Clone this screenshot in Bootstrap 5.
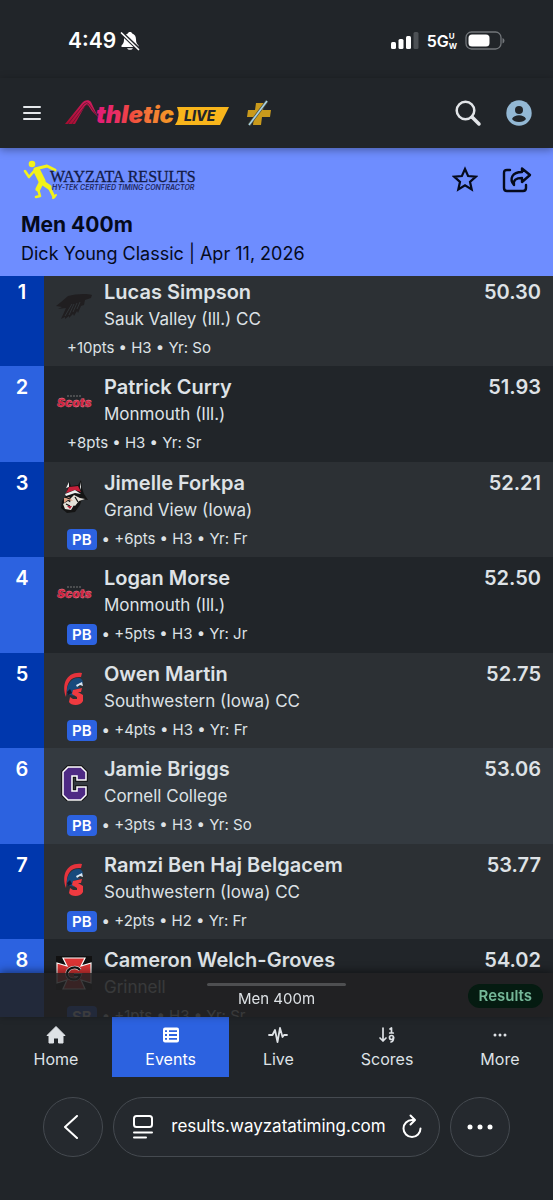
<!DOCTYPE html>
<html lang="en" data-bs-theme="dark">
<head>
<meta charset="utf-8">
<meta name="viewport" content="width=device-width, initial-scale=1">
<title>Men 400m - Wayzata Results</title>
<link href="https://cdn.jsdelivr.net/npm/bootstrap@5.3.0/dist/css/bootstrap.min.css" rel="stylesheet">
<style>
body{font-family:Inter,"Liberation Sans",sans-serif;background:#212529;color:#dee2e6}
svg{display:block;flex:none}
button{color:inherit}
.status{height:78px;padding:4px 48px 0 68px;color:#fff}
.clock{font-size:21px;font-weight:600;line-height:28px}
.carrier{font-size:16px;font-weight:600;line-height:20px}
.carrier-tag{font-size:8px;font-weight:700;line-height:10px}
.appbar{height:70px;padding:0 21px;position:relative;z-index:2;box-shadow:0 2px 8px rgba(0,0,0,.35)}
.event-head{background:#6e8dff;color:#050a1c;padding:10px 21px 8px}
.event-head h1{font-size:21px;font-weight:700;line-height:30px;color:#050a1c}
.event-head p{font-size:18px;line-height:28px}
.stage{flex:1 1 0;min-height:0}
.scroller{overflow-y:auto;scrollbar-width:none}
.scroller::-webkit-scrollbar{display:none}
.results{margin-top:-5px}
.results td{padding:8px 0 6px;vertical-align:top}
.results tr{background:#2c3034}
.results tr:nth-child(even){background:#212529}
.results tr:nth-child(even) td{padding-bottom:7px}
.results tr.picked:nth-child(even){background:#343a40}
.results .rank{width:44px;background:#0037ad;color:#fff;text-align:center;font-size:20px;font-weight:600;line-height:27px}
.results tr:nth-child(even) .rank{background:#2c62e0}
.team-logo{width:60px;padding:9px 0 0 12px}
.athlete,.mark-time{font-size:20px;font-weight:600;line-height:27px}
.results .mark-time{padding-right:12px;text-align:right}
.school{font-size:17px;line-height:27px}
.facts{font-size:15px;line-height:24px;margin:3px 0 0 23px}
.best{background:#2c62e0;color:#fff;font-weight:600;border-radius:4px;line-height:21px;padding:0 5px;margin-right:5px}
.sheet{height:44px;background:rgba(33,33,34,.88);box-shadow:0 -2px 8px rgba(0,0,0,.45)}
.grip{width:25%;height:3px;background:#4e4f51;margin-top:10px}
.sheet-title{font-size:15px;line-height:26px}
.state{right:10px;top:11px;background:#051b11;color:#75b798;font-size:15px;font-weight:600;line-height:24px;padding:0 11px}
.tabs a{color:#dee2e6;font-size:16px;line-height:28px;height:60px;padding-top:8px;text-decoration:none}
.tabs a.active{background:#2c62e0;color:#fff}
.browser{padding:20px 43px 43px;gap:10px;color:#fff}
.glass{background:#25292e;border:1px solid #454a50;height:60px}
.disc{width:60px;flex:none}
.address{font-size:17px;min-width:0}
</style>
</head>
<body>
<svg width="0" height="0" class="position-absolute" aria-hidden="true">
  <symbol id="spartan" viewBox="0 0 36 36"><path d="M10 27C5 14 11 1 26 3l-1 4C15 6 12 12 11 18z" fill="#e5333c"/><path d="M11 24c-1-9 4-16 11-16 3 0 5 2 5 5l-7 3 5 2-5 1-3 1 1 6z" fill="#174a7c"/><path d="m20 15 6-3 1 4-3-1-3 2z" fill="#d7e7f5"/><path d="m17 20 9-2-1 4h-3l5 3v6c-2 5-12 5-14 1l1-5 3 2h4v-2l-5-3z" fill="#ef3a40"/><path d="m11 22 3-3 2 4-4 2z" fill="#111c30"/></symbol>
</svg>
<div class="vh-100 d-flex flex-column overflow-hidden">
  <div class="status flex-shrink-0 d-flex align-items-center justify-content-between">
    <div class="d-flex align-items-center gap-1">
      <span class="clock">4:49</span>
      <svg width="20" height="20" viewBox="0 0 20 20" fill="#fff"><path d="M10 1c-1.300 0-2 .7-2.200 1.500C5 3.400 4 5.500 4 8.500c0 3-.8 4.500-2.500 6V16h17v-1.500C16.800 13 16 11.500 16 8.500c0-3-1-5.100-3.800-6C12 1.700 11.300 1 10 1zM7 17.200a3.200 2.500 0 0 0 6 0z"/><path d="M1 1.500 19 18.500" stroke="#212529" stroke-width="4"/><path d="M1.500 2 18.500 18.500" stroke="#fff" stroke-width="1.700" stroke-linecap="round"/></svg>
    </div>
    <div class="d-flex align-items-center">
      <svg width="28" height="18" viewBox="0 0 28 18" fill="#fff"><rect y="10" width="5" height="7" rx="1.500"/><rect x="7.500" y="7" width="5" height="10" rx="1.500"/><rect x="15" y="4" width="5" height="13" rx="1.500"/><rect x="22.500" width="5" height="17" rx="1.500" fill="#4d5155"/></svg>
      <span class="carrier ms-2">5G</span><span class="carrier-tag d-flex flex-column"><span>U</span><span>W</span></span>
      <svg class="ms-2" width="40" height="20" viewBox="0 0 40 20"><rect x="1" y="1" width="35" height="17" rx="5.500" fill="none" stroke="#72767a" stroke-width="1.300"/><rect x="3.500" y="3.500" width="21" height="12" rx="3.500" fill="#fff"/><path d="M37.500 7q2 .5 2 2.700t-2 2.700z" fill="#72767a"/></svg>
    </div>
  </div>

  <header class="appbar flex-shrink-0 d-flex align-items-center">
    <button class="btn p-0 border-0" aria-label="Menu"><svg width="20" height="18" viewBox="0 0 20 18"><path d="M3 3h16M3 9h16M3 15h16" stroke="#e5e8eb" stroke-width="2" stroke-linecap="round"/></svg></button>
    <a href="#" class="ms-4" aria-label="AthleticLIVE">
      <svg width="164" height="30" viewBox="0 0 164 30">
        <defs><linearGradient id="heat" gradientUnits="userSpaceOnUse" x1="34" y1="0" x2="114" y2="0"><stop offset="0" stop-color="#e21c77"/><stop offset=".2" stop-color="#e82c66"/><stop offset=".4" stop-color="#f0493f"/><stop offset=".65" stop-color="#f47b36"/><stop offset="1" stop-color="#f3a21e"/></linearGradient><linearGradient id="wing" x1="0" y1="1" x2="1" y2="0"><stop offset="0" stop-color="#a60d2f"/><stop offset="1" stop-color="#d41e62"/></linearGradient></defs>
        <path d="M0 26 17 5c2-3 7-4 9-1l7 15-6-6-4-6c-1-1-2 0-3 1L10 26z" fill="url(#wing)"/><path d="M3 26 19 6q3-3 5 0l8 12M7 26 20 8q2-2 3 0" fill="none" stroke="#5e1430" stroke-width=".8"/>
        <path d="M112 9h52l-9 18h-45q6-9 2-18z" fill="#f8b51b"/>
        <text x="31" y="25" font-family="Inter" font-size="24" font-weight="900" font-style="italic" fill="url(#heat)">thletic</text>
        <text x="119" y="23" font-family="Inter" font-size="14" font-weight="800" font-style="italic" fill="#23262a">LIVE</text>
      </svg></a>
    <svg class="ms-3" width="28" height="28" viewBox="0 0 28 28"><path d="M11 4h8l-1 7h8l-1 7h-8l-1 8H8l1-8H2l1-7h7z" fill="#c99a1c"/><path d="M22 2 4 26" stroke="#4d513f" stroke-width="3"/><path d="M22 2 4 26" stroke="#a9d3e6" stroke-width="1.600"/></svg>
    <button class="btn p-0 border-0 ms-auto" aria-label="Search"><svg width="28" height="28" viewBox="0 0 28 28" fill="none" stroke="#e2e5e8"><circle cx="11.500" cy="11.500" r="8.800" stroke-width="2.500"/><path d="m18 18 7 7" stroke-width="3.500" stroke-linecap="round"/></svg></button>
    <button class="btn p-0 border-0 ms-4" aria-label="Account"><svg width="26" height="26" viewBox="0 0 26 26"><circle cx="13" cy="13" r="12.700" fill="#93b8d4"/><circle cx="13" cy="10" r="4" fill="#212529"/><path d="M6 19c2-5 12-5 14 0q-2 3-7 3t-7-3z" fill="#212529"/></svg></button>
  </header>

  <section class="event-head">
    <div class="d-flex justify-content-between align-items-center mb-2">
      <svg width="178" height="44" viewBox="0 0 178 44" role="img" aria-label="Wayzata Results">
        <g fill="none" stroke="#f2f21a" stroke-linecap="round" stroke-linejoin="round"><path d="m14 11 12-3 8 4" stroke-width="3"/><path d="m14 12-6 7-4-6" stroke-width="2.600"/><path d="m16 13 5 10" stroke-width="7"/><path d="m22 25 6 4" stroke-width="5"/><path d="m28 29 4 8 1 2" stroke-width="3"/><path d="m20 25-3 6" stroke-width="5"/><path d="m17 31 2 7-4 1" stroke-width="2.600"/><path d="m32 40 3-3" stroke-width="2"/></g><circle cx="11" cy="6" r="3.300" fill="#f2f21a"/>
        <text x="29" y="24" font-family="Liberation Serif" font-size="16" fill="#121a45" stroke="#121a45" stroke-width=".3">WAYZATA RESULTS</text>
        <text x="31" y="32" font-family="Inter" font-size="7" font-weight="600" font-style="italic" fill="#1c2660">HY-TEK CERTIFIED TIMING CONTRACTOR</text>
      </svg>
      <div class="d-flex gap-4">
        <button class="btn p-0 border-0" aria-label="Favourite"><svg width="26" height="28" viewBox="0 0 26 28"><path d="m13 3 3.100 7 7.700.7-5.800 5.100 1.700 7.600L13 19.400l-6.700 4 1.700-7.600-5.800-5.100 7.700-.7z" fill="none" stroke="#050a1c" stroke-width="2.200"/></svg></button>
        <button class="btn p-0 border-0" aria-label="Share"><svg width="30" height="28" viewBox="0 0 30 28" fill="none" stroke="#050a1c" stroke-width="2.400" stroke-linejoin="round" stroke-linecap="round"><path d="M8 4H5q-3 0-3 3v15q0 3 3 3h16q3 0 3-3v-3"/><path d="M20 2.500 28 9l-8 7v-4c-6 0-9 2-8 7-5-6-2-13 8-13z"/></svg></button>
      </div>
    </div>
    <h1 class="mb-0">Men 400m</h1>
    <p class="mb-0">Dick Young Classic | Apr 11, 2026</p>
  </section>

  <main class="stage position-relative">
    <div class="scroller h-100">
      <table class="results w-100">
        <tbody>
        <tr><td class="rank">1</td><td><div class="d-flex"><div class="team-logo"><svg width="36" height="36" viewBox="0 0 36 36"><path d="M36 7c-6-2-17-1-24 1L5 14l-5 4 6 1-4 2 8-1-5 11 4-2v2l4-3v2l4-4 1 2 3-5 1 2 3-7 3-1 1-5 6-2z" fill="#201e20"/><path d="M16 16 9 28m9-12-5 11m8-12-4 9m7-10-3 7" stroke="#34383c" stroke-width=".8"/></svg></div><div><div class="athlete">Lucas Simpson</div><div class="school">Sauk Valley (Ill.) CC</div></div></div><div class="facts">+10pts • H3 • Yr: So</div></td><td class="mark-time">50.30</td></tr>
        <tr><td class="rank">2</td><td><div class="d-flex"><div class="team-logo"><svg width="36" height="36" viewBox="0 0 36 36"><text x="1" y="24" font-family="Inter" font-size="12" font-weight="900" font-style="italic" fill="#d3203f" stroke="#e8909f" stroke-width=".3">Scots</text><path d="M11 13h14" stroke="#777" stroke-dasharray="2 1"/></svg></div><div><div class="athlete">Patrick Curry</div><div class="school">Monmouth (Ill.)</div></div></div><div class="facts">+8pts • H3 • Yr: Sr</div></td><td class="mark-time">51.93</td></tr>
        <tr><td class="rank">3</td><td><div class="d-flex"><div class="team-logo"><svg width="36" height="36" viewBox="0 0 36 36"><path d="m12 8 1-6 2 5 7-1 3-5 1 8 2 6 4 6-6-1-2 6-5 7-8 1-6-5 1-7 4-5z" fill="#141414"/><path d="m10 14 3-6 9-1 3 6-6-2z" fill="#c5203a"/><path d="m24 8 1-5v8zM10 9l3-6v5zM9 15l10-4 6 4-6-1-9 3z" fill="#eee"/><path d="m18 16 6 3 5 1-6 2-4 5-5-3 1-5zM7 25l5-3 6 4-3 5-6-1z" fill="#e5e1d8"/><path d="m8 19 5-1 4 4-5-1-4 3z" fill="#dba186"/><path d="M9 18l5 2M19 18l3 5M10 25l4 2" stroke="#141414" stroke-width="1.300"/><path d="m11 27 5 0-2 3z" fill="#b32238"/></svg></div><div><div class="athlete">Jimelle Forkpa</div><div class="school">Grand View (Iowa)</div></div></div><div class="facts d-flex align-items-center"><span class="best">PB</span>• +6pts • H3 • Yr: Fr</div></td><td class="mark-time">52.21</td></tr>
        <tr><td class="rank">4</td><td><div class="d-flex"><div class="team-logo"><svg width="36" height="36" viewBox="0 0 36 36"><text x="1" y="24" font-family="Inter" font-size="12" font-weight="900" font-style="italic" fill="#d3203f" stroke="#e8909f" stroke-width=".3">Scots</text><path d="M11 13h14" stroke="#777" stroke-dasharray="2 1"/></svg></div><div><div class="athlete">Logan Morse</div><div class="school">Monmouth (Ill.)</div></div></div><div class="facts d-flex align-items-center"><span class="best">PB</span>• +5pts • H3 • Yr: Jr</div></td><td class="mark-time">52.50</td></tr>
        <tr><td class="rank">5</td><td><div class="d-flex"><div class="team-logo"><svg width="36" height="36"><use href="#spartan"/></svg></div><div><div class="athlete">Owen Martin</div><div class="school">Southwestern (Iowa) CC</div></div></div><div class="facts d-flex align-items-center"><span class="best">PB</span>• +4pts • H3 • Yr: Fr</div></td><td class="mark-time">52.75</td></tr>
        <tr class="picked"><td class="rank">6</td><td><div class="d-flex"><div class="team-logo"><svg width="36" height="36" viewBox="0 0 36 36"><path d="M12 2h13l5 5v8h-9v-4h-5v15h5v-4h9v8l-5 5H12l-5-5V7z" fill="#4e2a84" stroke="#111" stroke-width="3.500"/><path d="M12 2h13l5 5v8h-9v-4h-5v15h5v-4h9v8l-5 5H12l-5-5V7z" fill="#4e2a84" stroke="#fff" stroke-width="1.500"/></svg></div><div><div class="athlete">Jamie Briggs</div><div class="school">Cornell College</div></div></div><div class="facts d-flex align-items-center"><span class="best">PB</span>• +3pts • H3 • Yr: So</div></td><td class="mark-time">53.06</td></tr>
        <tr><td class="rank">7</td><td><div class="d-flex"><div class="team-logo"><svg width="36" height="36"><use href="#spartan"/></svg></div><div><div class="athlete">Ramzi Ben Haj Belgacem</div><div class="school">Southwestern (Iowa) CC</div></div></div><div class="facts d-flex align-items-center"><span class="best">PB</span>• +2pts • H2 • Yr: Fr</div></td><td class="mark-time">53.77</td></tr>
        <tr><td class="rank">8</td><td><div class="d-flex"><div class="team-logo"><svg width="36" height="36" viewBox="0 0 36 36"><path d="M0 0h36v34H0z" fill="#111"/><path d="M7 2h22l-4 8 10-3v20l-10-3 4 9H7l4-9-10 3V7l10 3z" fill="#dc3434" stroke="#fff" stroke-width="1.200"/><circle cx="18" cy="18" r="8" fill="#dc3434"/><path d="M24 14c-4-5-13-2-13 4s11 8 13 1h-6" fill="none" stroke="#fff" stroke-width="3.500"/><path d="M24 14c-4-5-13-2-13 4s11 8 13 1h-6" fill="none" stroke="#111" stroke-width="2.200"/></svg></div><div><div class="athlete">Cameron Welch-Groves</div><div class="school">Grinnell</div></div></div><div class="facts d-flex align-items-center"><span class="best">SB</span>• +1pts • H3 • Yr: Sr</div></td><td class="mark-time">54.02</td></tr>
        </tbody>
      </table>
    </div>
    <div class="sheet position-absolute bottom-0 start-0 w-100 d-flex flex-column align-items-center">
      <div class="grip rounded-pill"></div>
      <div class="sheet-title">Men 400m</div>
      <span class="state position-absolute rounded-pill">Results</span>
    </div>
  </main>

  <nav class="tabs d-flex">
    <a href="#" class="flex-fill d-flex flex-column align-items-center"><svg width="20" height="20" viewBox="0 0 20 20" fill="currentColor"><path d="M10 1.500 1 10.500h2V18h4.500v-5h5v5H17v-7.500h2z" stroke="currentColor" stroke-linejoin="round"/></svg>Home</a>
    <a href="#" class="active flex-fill d-flex flex-column align-items-center" aria-current="page"><svg width="20" height="20" viewBox="0 0 20 20"><rect x="2" y="2.500" width="16" height="15" rx="2" fill="#fff"/><path d="M4 6.200h2m2 0h8M4 10h2m2 0h8M4 13.800h2m2 0h8" stroke="#2c62e0" stroke-width="1.800"/></svg>Events</a>
    <a href="#" class="flex-fill d-flex flex-column align-items-center"><svg width="20" height="20" viewBox="0 0 20 20" fill="none" stroke="currentColor" stroke-width="1.800" stroke-linecap="round" stroke-linejoin="round"><path d="M1 10h3.500L7 5l2.500 12L12 3l2.500 9 1.500-2h3"/></svg>Live</a>
    <a href="#" class="flex-fill d-flex flex-column align-items-center"><svg width="20" height="20" viewBox="0 0 20 20" fill="none" stroke="currentColor" stroke-width="1.700" stroke-linecap="round" stroke-linejoin="round"><path d="M6 3v13M3 13l3 3 3-3M13 4l1.500-1v4.500M12.700 8h3.600"/><circle cx="14.500" cy="12.500" r="2"/><path d="M16.500 12.500q0 4-2.500 4.500"/></svg>Scores</a>
    <a href="#" class="flex-fill d-flex flex-column align-items-center"><svg width="20" height="20" viewBox="0 0 20 20" fill="currentColor"><circle cx="5" cy="10" r="1.500"/><circle cx="10" cy="10" r="1.500"/><circle cx="15" cy="10" r="1.500"/></svg>More</a>
  </nav>

  <footer class="browser d-flex">
    <button class="glass disc rounded-circle p-0 d-flex align-items-center justify-content-center" aria-label="Back"><svg width="24" height="24" viewBox="0 0 24 24" fill="none" stroke="#fff" stroke-width="2" stroke-linecap="round" stroke-linejoin="round"><path d="M16 1 4 12l12 11"/></svg></button>
    <div class="glass rounded-pill flex-grow-1 d-flex align-items-center address px-3">
      <button class="btn p-0 border-0 me-auto" aria-label="Page options"><svg width="26" height="26" viewBox="0 0 26 26" fill="none" stroke="#fff" stroke-width="2" stroke-linecap="round"><rect x="4" y="2" width="18" height="11" rx="2.500"/><path d="M4 18.500h18M4 23.500h12"/></svg></button>
      <span>results.wayzatatiming.com</span>
      <button class="btn p-0 border-0 ms-auto" aria-label="Reload"><svg width="22" height="26" viewBox="0 0 22 26" fill="none" stroke="#fff" stroke-width="2" stroke-linecap="round" stroke-linejoin="round"><path d="M13 6h-2a8.500 8.500 0 1 0 8.500 8.500M9.500 1.500 14 6l-4.500 4.500"/></svg></button>
    </div>
    <button class="glass disc rounded-circle p-0 d-flex align-items-center justify-content-center" aria-label="More options"><svg width="26" height="8" viewBox="0 0 26 8" fill="#fff"><circle cx="3" cy="4" r="2.500"/><circle cx="13" cy="4" r="2.500"/><circle cx="23" cy="4" r="2.500"/></svg></button>
  </footer>
</div>
<script src="https://cdn.jsdelivr.net/npm/bootstrap@5.3.0/dist/js/bootstrap.bundle.min.js"></script>
</body>
</html>
